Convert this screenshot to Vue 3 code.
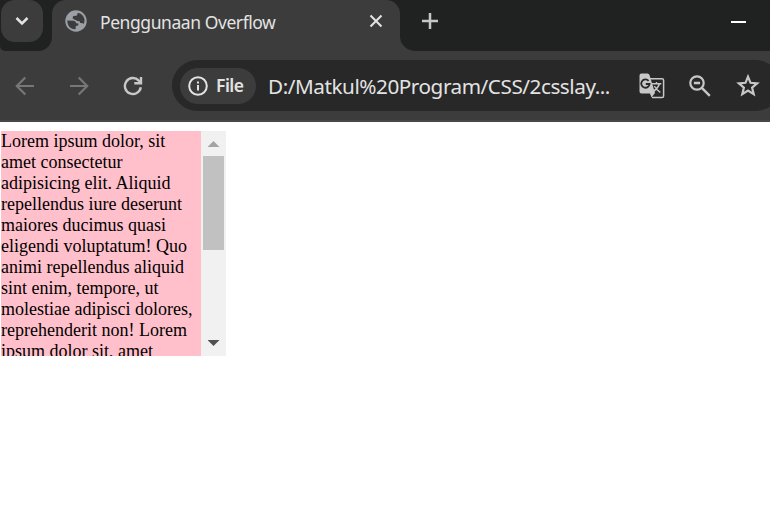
<script setup>
const lines = [
  'Lorem ipsum dolor, sit',
  'amet consectetur',
  'adipisicing elit. Aliquid',
  'repellendus iure deserunt',
  'maiores ducimus quasi',
  'eligendi voluptatum! Quo',
  'animi repellendus aliquid',
  'sint enim, tempore, ut',
  'molestiae adipisci dolores,',
  'reprehenderit non! Lorem',
  'ipsum dolor sit, amet',
]
</script>

<template>
  <div class="window">
    <header class="tabs">
      <div class="lead">
        <button class="search-tabs" aria-label="Search tabs">
          <svg width="42" height="42" viewBox="0 0 42 42"><path d="M15.5 18 L21 23.5 L26.5 18" fill="none" stroke="#e3e3e3" stroke-width="2.5" /></svg>
        </button>
      </div>
      <div class="tab">
        <svg class="globe" width="22" height="22" viewBox="0 0 22 22">
          <circle cx="11" cy="11" r="10.7" fill="#9aa0a6" />
          <path d="M2.3 10.6 L8.5 10.8 Q11 11 11.2 13.2 L13.4 13.4 L13.2 15.6 L10.8 16 L10.6 19.2 Q5.4 19.3 3.2 14.9 Q2.2 12.6 2.3 10.6 Z M12.6 2.7 Q18.4 3.7 19.5 9.6 Q19.7 12 18.6 14 Q17.6 12.6 15 13 L14.8 11.3 Q12 11.4 11.2 10.2 Q9 9.9 7.6 8.2 L8.2 6 L11.4 5.8 L12.4 4.5 Z" fill="#3c3c3c" />
        </svg>
        <span class="title">Penggunaan Overflow</span>
        <svg class="close" width="14" height="14" viewBox="0 0 14 14"><path d="M1.5 1.5 L12.5 12.5 M12.5 1.5 L1.5 12.5" stroke="#e3e3e3" stroke-width="2.1" /></svg>
      </div>
      <div class="rest">
        <svg width="16" height="16" viewBox="0 0 16 16"><path d="M8 0 V16 M0 8 H16" stroke="#c7c7c7" stroke-width="2.5" /></svg>
        <span class="minimize"></span>
      </div>
    </header>

    <nav class="toolbar">
      <svg class="back" width="20" height="20" viewBox="0 0 20 20"><path d="M19 10 H2 M10.3 1.5 L1.8 10 L10.3 18.5" fill="none" stroke="#777" stroke-width="2.2" /></svg>
      <svg class="forward" width="20" height="20" viewBox="0 0 20 20"><path d="M1 10 H18 M9.7 1.5 L18.2 10 L9.7 18.5" fill="none" stroke="#777" stroke-width="2.2" /></svg>
      <svg class="reload" width="20" height="20" viewBox="0 0 20 20"><path d="M17.8 11.3 A8 8 0 1 1 15.8 4.6 L17.8 6.6" fill="none" stroke="#c7c7c7" stroke-width="2.4" /><path d="M18 1 V7.3 H11.3" fill="none" stroke="#c7c7c7" stroke-width="2.4" /></svg>
      <div class="omnibox">
        <div class="chip">
          <svg width="20" height="20" viewBox="0 0 20 20"><circle cx="10" cy="10" r="8.8" fill="none" stroke="#e3e3e3" stroke-width="2" /><path d="M10 9 V14.6 M10 5.4 V7.4" stroke="#e3e3e3" stroke-width="2" /></svg>
          <span>File</span>
        </div>
        <span class="url">D:/Matkul%20Program/CSS/2csslay...</span>
        <svg class="translate" width="26" height="26" viewBox="0 0 26 26">
          <path d="M10 5.8 H23 Q24.6 5.8 24.6 7.4 V22.9 Q24.6 24.5 23 24.5 H13" fill="none" stroke="#c7c7c7" stroke-width="1.5" />
          <path d="M2.5 0.5 H8.6 Q10 0.5 10.5 2 L16 20 L12.5 24.5 L11 20.5 H2.5 Q0.5 20.5 0.5 18.5 V2.5 Q0.5 0.5 2.5 0.5 Z" fill="#c7c7c7" />
          <path d="M9.6 7.8 A4.2 4.2 0 1 0 10.6 11 H6.8" fill="none" stroke="#282828" stroke-width="1.8" />
          <path d="M12.8 10.7 H22.3 M17.5 9 V10.7 M20.5 10.8 Q19.2 15 14.5 18.4 M15.3 13 Q17.5 17 21.3 19.3" fill="none" stroke="#c7c7c7" stroke-width="1.4" />
        </svg>
        <svg class="lens" width="22" height="22" viewBox="0 0 22 22"><circle cx="8" cy="8" r="6.7" fill="none" stroke="#c7c7c7" stroke-width="2.2" /><path d="M4.9 8 H11.1 M12.8 12.8 L20.8 20.8" stroke="#c7c7c7" stroke-width="2.4" /></svg>
        <svg class="star" width="24" height="23" viewBox="0 0 24 23"><path d="M12 2.7 L14.5 8.8 L21.1 9.3 L16.1 13.6 L17.7 20.1 L12 16.6 L6.3 20.1 L7.9 13.6 L2.9 9.3 L9.5 8.8 Z" fill="none" stroke="#c7c7c7" stroke-width="2.2" /></svg>
      </div>
    </nav>

    <main class="page">
      <div class="box">
        <div class="copy"><div v-for="line in lines" :key="line">{{ line }}</div></div>
        <div class="scrollbar">
          <span class="arrow up"></span>
          <span class="thumb"></span>
          <span class="arrow down"></span>
        </div>
      </div>
    </main>
  </div>
</template>

<style>
body { margin: 0; background: #fff; }
</style>

<style scoped>
* { box-sizing: border-box; }
svg { display: block; flex: none; }
.window { width: 770px; height: 507px; overflow: hidden; background: #fff; font-family: "Noto Sans", "Open Sans", sans-serif; }
.tabs { display: flex; height: 51px; background: linear-gradient(#202221 24px, #3c3c3c 24px); }
.lead, .rest { flex: none; background: #202221; }
.lead { width: 52px; height: 51px; padding-left: 1px; border-radius: 0 0 14px 5px; }
.search-tabs { display: block; width: 42px; height: 42px; padding: 0; border: 0; border-radius: 14px; background: #3c3c3c; }
.tab { display: flex; width: 348px; height: 51px; padding-left: 13px; background: #3c3c3c; border-radius: 14px 14px 0 0; }
.globe { margin-top: 10px; }
.title { width: 200px; margin-left: 13px; font-size: 17.5px; line-height: 24px; padding-top: 10px; letter-spacing: -0.43px; color: #e3e3e3; white-space: nowrap; }
.close { margin: 14px 0 0 69px; }
.rest { display: flex; justify-content: space-between; width: 370px; height: 51px; padding: 13px 24px 0 22px; border-bottom-left-radius: 15px; }
.minimize { width: 15px; height: 2px; margin-top: 8px; background: #fff; }
.toolbar { display: flex; height: 71px; padding: 9px 0 0 15px; background: #3c3c3c; border-bottom: 2px solid #484648; }
.back, .forward, .reload { margin-top: 16px; }
.forward { margin-left: 34px; }
.reload { margin-left: 34px; }
.omnibox { display: flex; flex: none; align-items: center; width: 609px; height: 51px; margin-left: 29px; padding-left: 8px; border-radius: 26px; background: #282828; color: #e3e3e3; }
.chip { display: flex; align-items: center; flex: none; width: 76px; height: 36px; padding-left: 8px; border-radius: 18px; background: #3c3c3c; }
.chip span { margin-left: 8px; font-size: 17.5px; font-weight: 600; letter-spacing: -0.5px; line-height: 24px; padding-bottom: 1px; }
.url { width: 372px; margin-left: 12px; font-size: 20.7px; line-height: 28px; letter-spacing: -0.45px; white-space: nowrap; }
.translate { margin-left: -1px; }
.lens { margin-left: 24px; }
.star { margin-left: 25px; }
.page { padding: 9px 0 0 1px; }
.box { display: flex; width: 225px; height: 225px; overflow: hidden; }
.copy { width: 200px; overflow: hidden; background: #ffc0cb; color: #000; font: 18px/21px "Liberation Serif", serif; white-space: nowrap; }
.scrollbar { display: flex; flex-direction: column; align-items: center; width: 25px; background: #f1f1f1; }
.thumb { width: 21px; height: 94px; margin-top: 9px; background: #c1c1c1; }
.arrow { width: 12px; height: 6px; clip-path: polygon(50% 0, 100% 100%, 0 100%); background: #a3a3a3; }
.up { margin-top: 10px; }
.down { margin-top: auto; margin-bottom: 10px; clip-path: polygon(0 0, 100% 0, 50% 100%); background: #505050; }
</style>
